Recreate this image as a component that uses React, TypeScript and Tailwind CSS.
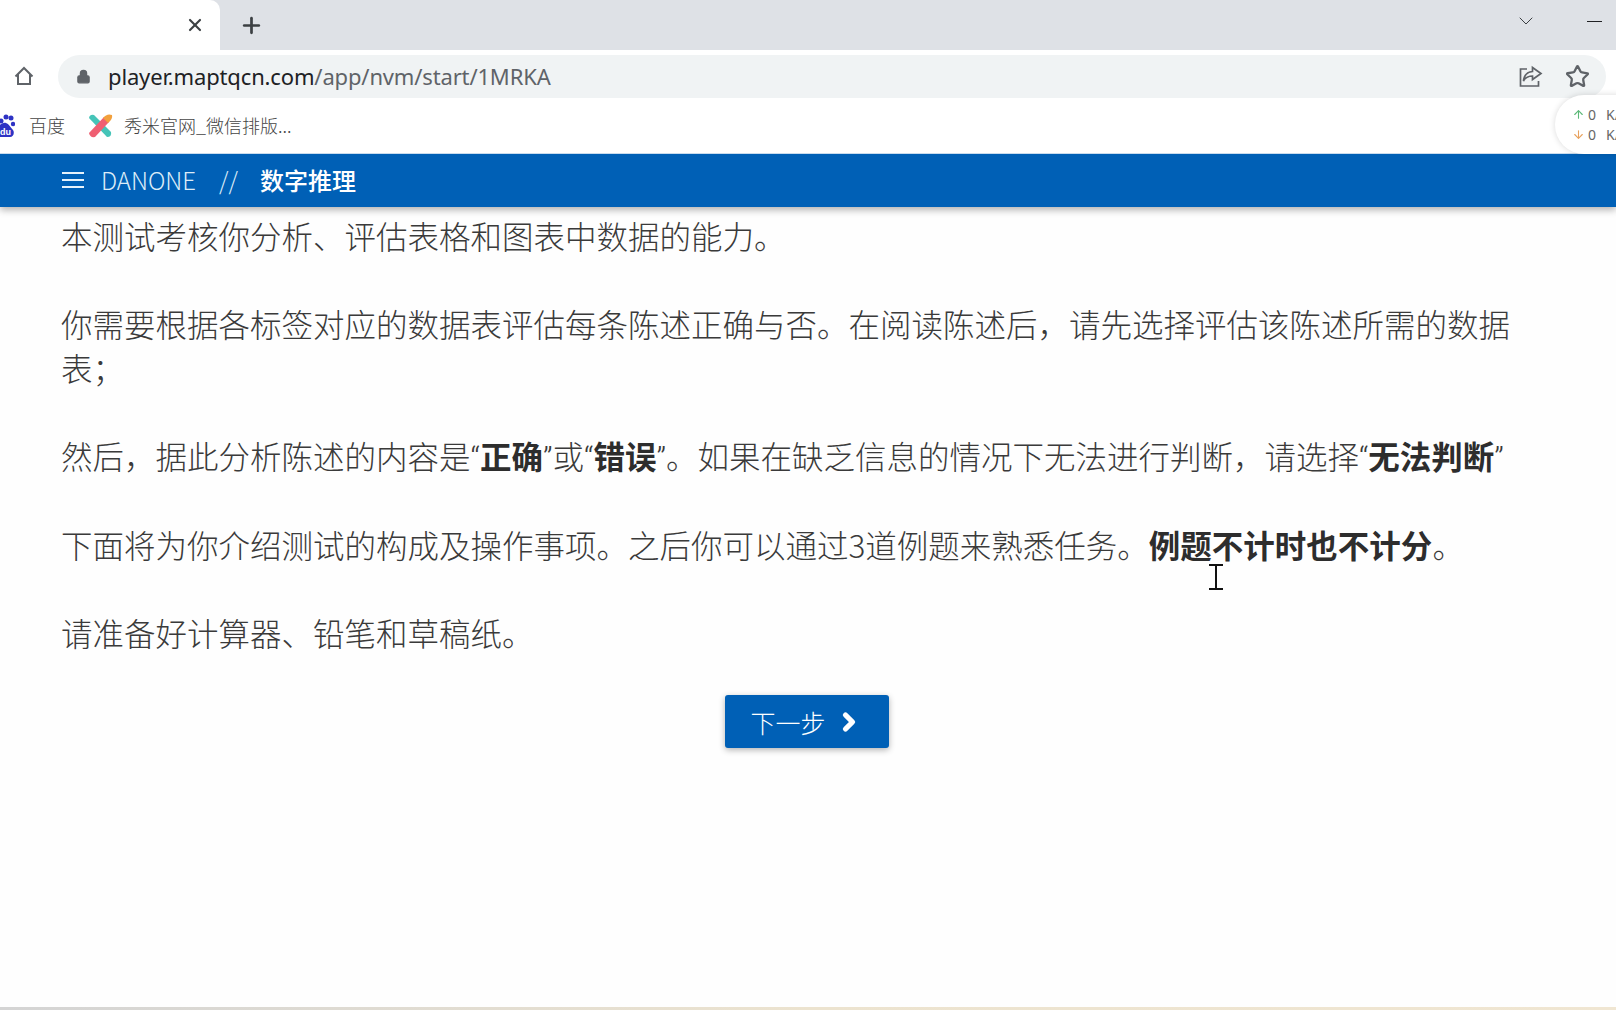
import React from 'react';
import { ArrowDown, ArrowUp, ChevronDown, ChevronRight, Lock, Plus, Star, X } from 'lucide-react';

const cjk = 'font-["Noto_Sans_CJK_SC","Noto_Sans",sans-serif]';

const Q: React.FC<{ children: React.ReactNode }> = ({ children }) => (
    <span className="font-['Roboto',sans-serif] font-light leading-none">{children}</span>
);

const Strong: React.FC<{ children: React.ReactNode }> = ({ children }) => (
    <b className="font-bold text-[#2d2d2d]">{children}</b>
);

const Browser: React.FC = () => {
    return (
        <div className="relative">
            {/* tab strip */}
            <div className="flex h-[50px] items-center bg-[#dee1e6]">
                <div className="flex h-full w-[220px] items-center justify-end rounded-tr-[10px] bg-white pr-[15px]">
                    <X size={20} strokeWidth={2.6} className="text-[#3c4043]" />
                </div>
                <Plus size={25} strokeWidth={2.6} className="ml-[19px] text-[#3c4043]" />
                <div className="flex-1" />
                <ChevronDown size={24} strokeWidth={1} className="mb-[8px] mr-[49px] text-[#3c4043]" />
                <div className="mb-[8px] mr-[14px] h-[1px] w-[15px] bg-[#202124]" />
            </div>

            {/* address bar */}
            <div className="flex h-[48px] items-center bg-white pr-[10px] pt-[4px]">
                <svg width="22" height="22" viewBox="0 0 22 22" fill="none" className="ml-[13px] text-[#5f6368]" stroke="currentColor" strokeWidth="2">
                    <path d="M2.5 11.5 11 3l8.5 8.5M5 9.5V19h12V9.5" />
                </svg>
                <div className="ml-[23px] flex h-[43px] flex-1 items-center rounded-full bg-[#f0f3f4] pl-[18px] pr-[16px]">
                    <Lock size={15} fill="currentColor" className="text-[#5f6368]" />
                    <span className="ml-[17px] text-[22px] font-['Noto_Sans',sans-serif] tracking-[-0.15px] text-[#202124]">
                        player.maptqcn.com<span className="text-[#5f6368]">/app/nvm/start/1MRKA</span>
                    </span>
                    <div className="flex-1" />
                    <svg width="26" height="24" viewBox="0 0 26 24" fill="none" stroke="#5f6368" strokeWidth="1.7">
                        <path d="M9 5H2.500v17h18v-5" />
                        <path d="M14.500 3.500 23 9.500l-8.500 6v-3.500c-4 0-7 1-9 5 .5-5.500 4-9 9-9.500z" />
                    </svg>
                    <Star size={25} strokeWidth={2.2} className="ml-[21px] text-[#5f6368]" />
                </div>
            </div>

            {/* bookmarks */}
            <div className="flex h-[55px] items-center bg-white">
                <svg width="15" height="24" viewBox="0 0 15 24" className="shrink-0">
                    <circle cx="1" cy="7" r="2.500" fill="#2e33c4" />
                    <circle cx="6" cy="3" r="2.500" fill="#2e33c4" />
                    <circle cx="11" cy="4" r="2.500" fill="#2e33c4" />
                    <circle cx="13" cy="10" r="2.200" fill="#2e33c4" />
                    <path d="M-3 15c2-5 7-7 9-6 3 1 4 4 7 7 2 3 0 7-3 7H-3z" fill="#2e33c4" />
                    <text x="0" y="21" fontSize="9" fontWeight="700" fill="#fff" fontFamily="Liberation Sans, sans-serif">du</text>
                </svg>
                <span className={`ml-[14px] text-[18px] font-light text-[#444] ${cjk}`}>百度</span>
                <svg width="26" height="26" viewBox="0 0 26 26" className="ml-[22px] shrink-0">
                    <path d="M2 5 Q3 1 7 2 L24 19 Q25 24 20 24z" fill="#45c4b8" />
                    <path d="M2 20 L17 4 L22 9 L8 24 Q3 25 2 20z" fill="#ef5f72" />
                    <path d="M16 5 Q20 0 25 2 Q26 6 21 10z" fill="#f2a03d" />
                </svg>
                <span className={`ml-[11px] text-[18px] font-light text-[#444] ${cjk}`}>秀米官网_微信排版...</span>
            </div>

            {/* net speed widget */}
            <div className="absolute right-[-40px] top-[95px] flex h-[59px] w-[101px] flex-col justify-center rounded-l-[29px] bg-white pl-[17px] text-[14px] leading-[20px] text-[#666] shadow-[0_0_6px_rgba(0,0,0,0.15)] font-['Noto_Sans',sans-serif]">
                <div className="flex items-center">
                    <ArrowUp size={13} strokeWidth={2} className="text-[#5cb878]" />
                    <span className="ml-[3px]">0</span>
                    <span className="ml-[10px]">K/</span>
                </div>
                <div className="flex items-center">
                    <ArrowDown size={13} strokeWidth={2} className="text-[#e8a25e]" />
                    <span className="ml-[3px]">0</span>
                    <span className="ml-[10px]">K/</span>
                </div>
            </div>
        </div>
    );
};

const Navbar: React.FC = () => {
    return (
        <header className="flex h-[54px] items-center border-t border-[#c9dcee] bg-[#0060b6] pb-[1px] pl-[62px] text-white shadow-[0_3px_7px_rgba(0,0,0,0.3)]">
            <svg width="22" height="18" viewBox="0 0 22 18" stroke="currentColor" strokeWidth="2" className="shrink-0 text-[#e6f2fb]">
                <path d="M0 2h22M0 9h22M0 16h22" />
            </svg>
            <span className={`ml-[17px] text-[24px] font-light text-[#dcecf8] ${cjk}`}>DANONE</span>
            <span className={`ml-[23px] text-[24px] font-light text-[#dcecf8] ${cjk}`}>//</span>
            <span className={`ml-[22px] text-[24px] font-medium ${cjk}`}>数字推理</span>
        </header>
    );
};

const App: React.FC = () => {
    return (
        <div className="relative h-[1010px] w-[1616px] overflow-hidden bg-[#fefefe]">
            <Browser />
            <Navbar />

            <main className={`pl-[61px] pr-[64px] pt-[6px] text-[31.5px] font-light leading-[44px] text-[#3a3a3a] ${cjk}`}>
                <p>本测试考核你分析、评估表格和图表中数据的能力。</p>
                <p className="mt-[44px] pr-[38px]">你需要根据各标签对应的数据表评估每条陈述正确与否。在阅读陈述后，请先选择评估该陈述所需的数据表；</p>
                <p className="mt-[44px] whitespace-nowrap">
                    然后，据此分析陈述的内容是<Q>“</Q><Strong>正确</Strong><Q>”</Q>或<Q>“</Q><Strong>错误</Strong><Q>”</Q>。如果在缺乏信息的情况下无法进行判断，请选择<Q>“</Q><Strong>无法判断</Strong><Q>”</Q>
                </p>
                <p className="mt-[45px] whitespace-nowrap">
                    下面将为你介绍测试的构成及操作事项。之后你可以通过3道例题来熟悉任务。<Strong>例题不计时也不计分</Strong>。
                </p>
                <p className="mt-[44px]">请准备好计算器、铅笔和草稿纸。</p>

                <div className="mt-[41px] flex justify-center">
                    <button className="flex h-[53px] w-[164px] items-center justify-center rounded-[3px] bg-[#0060b6] text-[25px] text-white shadow-[0_2px_6px_rgba(0,0,0,0.3)]">
                        下一步
                        <ChevronRight size={28} strokeWidth={4.5} className="ml-[9px]" />
                    </button>
                </div>
            </main>

            {/* text cursor */}
            <svg width="14" height="26" viewBox="0 0 14 26" stroke="#111" strokeWidth="2" fill="none" className="absolute left-[1209px] top-[564px]">
                <path d="M0 1h14M0 25h14M7 1v24" />
            </svg>

            <div className="absolute bottom-0 left-0 h-[3px] w-full bg-gradient-to-r from-[#d4d4d4] via-[#ece3cf] to-[#f0e6d2]" />
        </div>
    );
};

export default App;
